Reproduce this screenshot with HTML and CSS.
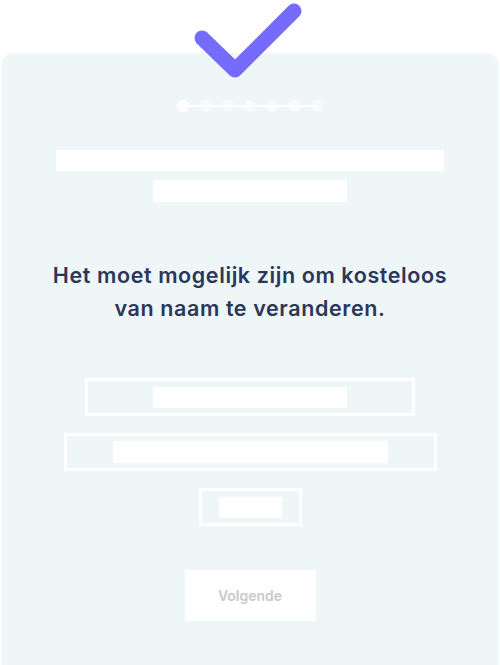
FILE: index.html
```html
<!DOCTYPE html>
<html lang="nl">
<head>
<meta charset="utf-8">
<title>Naam veranderen</title>
<link rel="stylesheet" href="styles.css">
</head>
<body>
<div class="page">
  <svg class="check" width="130" height="90" viewBox="0 0 130 90" aria-hidden="true">
    <polyline points="12,38 45,70 104,11" fill="none" stroke="#756bff" stroke-width="15" stroke-linecap="round" stroke-linejoin="round"/>
  </svg>
  <div class="card">
    <div class="steps">
      <span class="dot active"></span>
      <span class="dot"></span>
      <span class="dot"></span>
      <span class="dot"></span>
      <span class="dot"></span>
      <span class="dot"></span>
      <span class="dot"></span>
    </div>
    <div class="bar bar-wide"></div>
    <div class="bar bar-mid"></div>
    <h1 class="question">Het moet mogelijk zijn om kosteloos<br>van naam te veranderen.</h1>
    <div class="options">
      <div class="option opt-1"><div class="bar bar-o1"></div></div>
      <div class="option opt-2"><div class="bar bar-o2"></div></div>
      <div class="option opt-3"><div class="bar bar-o3"></div></div>
    </div>
    <button class="next">Volgende</button>
  </div>
</div>
</body>
</html>
```
FILE: styles.css
```css
html, body {
  margin: 0;
  padding: 0;
  background: #ffffff;
}
body {
  font-family: Inter, "Noto Sans", sans-serif;
}
.page {
  position: relative;
  width: 500px;
  height: 665px;
  padding-top: 53px;
  box-sizing: border-box;
  overflow: hidden;
}
.check {
  position: absolute;
  left: 190px;
  top: 0;
}
.card {
  margin: 0 1px;
  height: 624px;
  box-sizing: border-box;
  background: #eef6f8;
  border: 1px solid #f4f9fa;
  border-radius: 12px;
  display: flex;
  flex-direction: column;
  align-items: center;
  padding-top: 46px;
}
.steps {
  position: relative;
  display: flex;
  gap: 10.3px;
  height: 12px;
}
.steps::before {
  content: "";
  position: absolute;
  left: 6px;
  right: 6px;
  top: 5px;
  height: 2px;
  background: #ffffff;
}
.dot {
  position: relative;
  width: 12px;
  height: 12px;
  border-radius: 50%;
  background: rgba(255, 255, 255, 0.55);
}
.dot.active {
  background: #ffffff;
}
.bar {
  background: #ffffff;
}
.bar-wide {
  width: 388px;
  height: 21px;
  margin-top: 38px;
}
.bar-mid {
  width: 194px;
  height: 22px;
  margin-top: 9px;
}
.question {
  margin: 57px 0 0;
  font-size: 21.5px;
  line-height: 33px;
  font-weight: 600;
  color: #2b3658;
  text-align: center;
  letter-spacing: 0.6px;
}
.options {
  margin-top: 53px;
  display: flex;
  flex-direction: column;
  align-items: center;
  gap: 17px;
}
.option {
  box-sizing: border-box;
  height: 38px;
  border: 3px solid #ffffff;
  display: flex;
  align-items: center;
  justify-content: center;
}
.opt-1 { width: 330px; }
.opt-2 { width: 373px; }
.opt-3 { width: 103px; }
.bar-o1 { width: 194px; height: 21px; }
.bar-o2 { width: 275px; height: 22px; }
.bar-o3 { width: 63px; height: 21px; }
.next {
  margin-top: 44px;
  width: 131px;
  height: 51px;
  border: none;
  background: #ffffff;
  color: #c8c9cb;
  font-family: Inter, "Noto Sans", sans-serif;
  font-size: 14px;
  font-weight: 600;
  padding: 0;
}
```
